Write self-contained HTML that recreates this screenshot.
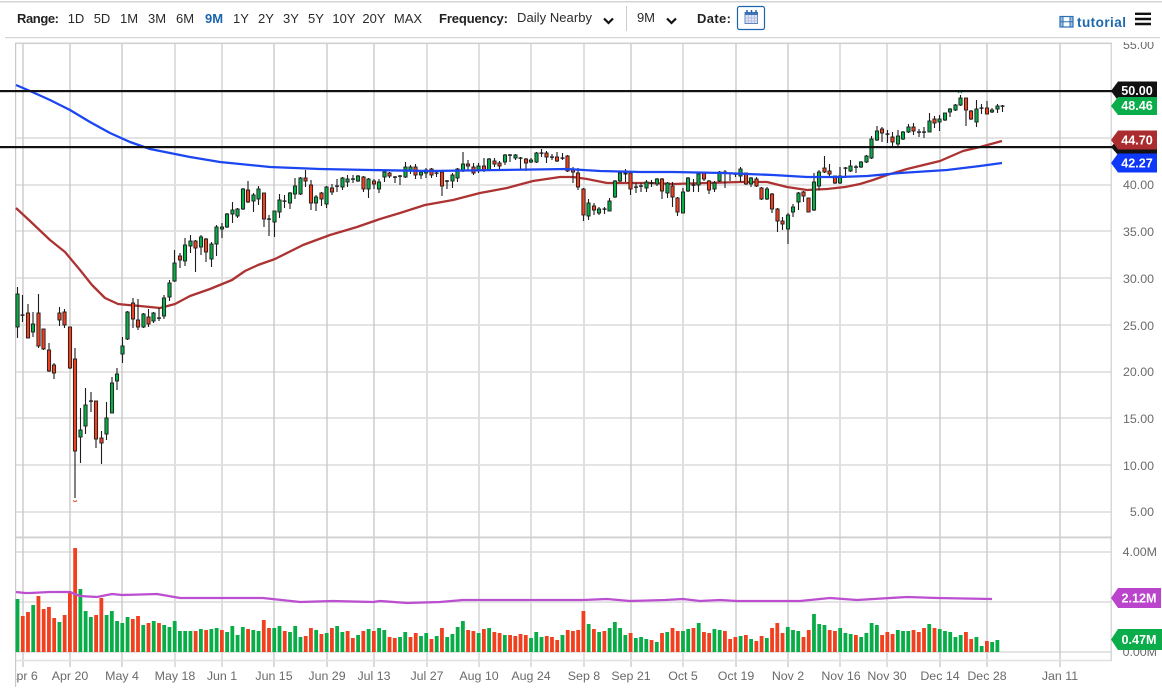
<!DOCTYPE html>
<html>
<head>
<meta charset="utf-8">
<title>Chart</title>
<style>
html,body{margin:0;padding:0;background:#fff;width:1162px;height:689px;overflow:hidden}
svg{display:block;font-family:"Liberation Sans",sans-serif}
.h{font-size:13px;fill:#2a2a2a}
.b{font-size:13px;font-weight:bold;fill:#222}
.a{font-size:12.4px;fill:#6a6a6a;text-anchor:end}
.x{font-size:12.4px;fill:#6a6a6a;text-anchor:middle}
.t{font-size:12.6px;font-weight:bold;fill:#fff;text-anchor:middle}
</style>
</head>
<body>
<svg id="s" xmlns="http://www.w3.org/2000/svg" width="1162" height="689" viewBox="0 0 1162 689">
<defs>
<clipPath id="top"><rect x="1112" y="42" width="50" height="20"/></clipPath>
<clipPath id="left"><rect x="16" y="665" width="40" height="24"/></clipPath>
</defs>
<rect x="0" y="1" width="1162" height="1.5" fill="#d4d4d4"/>
<rect x="5" y="37" width="1155" height="1.2" fill="#d4d4d4"/>

<text class="b" x="17" y="23" textLength="42">Range:</text>
<g class="h" text-anchor="middle">
<text x="76" y="23">1D</text><text x="102" y="23">5D</text><text x="129" y="23">1M</text><text x="157" y="23">3M</text><text x="185" y="23">6M</text>
<text x="214" y="23" font-weight="bold" style="fill:#1c64ad">9M</text>
<text x="241" y="23">1Y</text><text x="266" y="23">2Y</text><text x="291" y="23">3Y</text><text x="316" y="23">5Y</text><text x="344" y="23">10Y</text><text x="374" y="23">20Y</text><text x="408" y="23">MAX</text>
</g>
<text class="b" x="439" y="23" textLength="69">Frequency:</text>
<text class="h" x="517" y="22" textLength="75">Daily Nearby</text>
<path d="M604 18.500l4.500 4.500 4.500-4.500" fill="none" stroke="#111" stroke-width="2.2"/>
<rect x="626" y="6" width="1" height="25" fill="#ccc"/>
<text class="h" x="637" y="22" textLength="18">9M</text>
<path d="M667 18.500l4.500 4.500 4.500-4.500" fill="none" stroke="#111" stroke-width="2.2"/>
<text class="b" x="697" y="23" textLength="34">Date:</text>
<rect x="737.500" y="6.500" width="27" height="23" rx="2" fill="#fff" stroke="#1c64ad" stroke-width="1.2"/>
<rect x="745" y="12.500" width="12.500" height="11" fill="#e3e3f6" stroke="#5f86c2" stroke-width="1"/>
<rect x="745" y="12" width="13" height="3" fill="#3f74b8"/>
<path d="M747 10v3M751.500 10v3M756 10v3" stroke="#2d64ad" stroke-width="1.500"/>
<path d="M748.500 15v8M751.500 15v8M754.500 15v8M745 18h13M745 21h13" stroke="#a9b8dc" stroke-width=".7"/>

<rect x="1060" y="16.500" width="13" height="10.500" fill="none" stroke="#2a70b5" stroke-width="1.2"/>
<path d="M1063 16.500v10.500M1070 16.500v10.500M1060 21.700h13" stroke="#2a70b5" stroke-width="1"/>
<rect x="1060" y="16.500" width="3" height="10.500" fill="#2a70b5" opacity=".45"/>
<rect x="1070" y="16.500" width="3" height="10.500" fill="#2a70b5" opacity=".45"/>
<text x="1077" y="27" font-size="13.500" font-weight="bold" fill="#1c68ad" textLength="49">tutorial</text>
<path d="M1135 13.800h16M1135 19h16M1135 24h16" stroke="#111" stroke-width="2.400"/>

<g id="grid"></g>
<rect x="15" y="42.500" width="1097" height="1.600" fill="#d0d0d0"/>
<rect x="15" y="536.500" width="1097" height="1.800" fill="#cfcfcf"/>
<rect x="15" y="659.700" width="1097" height="1.600" fill="#e2e2e2"/>
<rect x="15" y="43" width="1.200" height="644" fill="#c8c8c8"/>
<rect x="1110.600" y="43" width="1.200" height="618" fill="#cfcfcf"/>

<g id="vol"></g>
<polyline fill="none" stroke="#bb4fd0" stroke-width="2.300" stroke-linejoin="round" points="16,592 25,593 30,593 50,592 70,592 80,596 97,597 112,594 122,595 157,594 180,598 207,598 263,598 300,602 333,601 373,602 380,601 407,603 440,602 463,600 533,600 583,600 607,599 630,601 665,600 683,599 700,601 720,600 737,601 783,601 800,601 830,598 857,600 907,597 937,598 992,599"/>
<polyline fill="none" stroke="#ad3232" stroke-width="2.300" stroke-linejoin="round" points="16,208 30,221 50,240 65,252 80,270 92,285 105,298 118,304 128,305 140,306 160,308 175,304 190,296 210,289 232,280 245,271 258,265 275,259 303,245 330,235 357,227 380,219 400,213 425,205 453,200 480,193 507,188 533,181 560,177 573,177 587,179 607,183 633,183 650,183 673,184 707,183 740,182 767,182 787,187 807,190 827,189 845,187 860,184 873,180 887,175 907,169 940,161 963,151 980,147 1002,141"/>
<g id="can"></g>
<polyline fill="none" stroke="#1b46f2" stroke-width="2.300" stroke-linejoin="round" points="16,85 30,91 50,100 70,110 90,122 110,133 130,142 150,149 170,153 190,157 220,162 270,167 320,169 370,170 430,171 500,170 567,169 600,171 640,172 673,172 723,173 773,175 807,177 840,177 867,176 900,173 947,170 980,166 1002,163"/>
<path d="M73 500.500q2 2 4 0" fill="none" stroke="#e8401f" stroke-width="1"/>
<path d="M958 93l2-2 2 2" fill="none" stroke="#0aad4a" stroke-width="1"/>
<rect x="0" y="90" width="1112" height="2.200" fill="#111"/>
<rect x="0" y="146" width="1112" height="2.200" fill="#111"/>

<g class="a">
<text x="1154" y="49" clip-path="url(#top)">55.00</text>
<text x="1154" y="189">40.00</text>
<text x="1154" y="236">35.00</text>
<text x="1154" y="283">30.00</text>
<text x="1154" y="330">25.00</text>
<text x="1154" y="376">20.00</text>
<text x="1154" y="423">15.00</text>
<text x="1154" y="470">10.00</text>
<text x="1154" y="516">5.00</text>
<text x="1157" y="556">4.00M</text>
<text x="1157" y="656">0.00M</text>
</g>

<g class="x">
<text x="23" y="680" clip-path="url(#left)">Apr 6</text>
<text x="70" y="680">Apr 20</text><text x="122" y="680">May 4</text><text x="175" y="680">May 18</text><text x="222" y="680">Jun 1</text><text x="274" y="680">Jun 15</text><text x="327" y="680">Jun 29</text><text x="374" y="680">Jul 13</text><text x="427" y="680">Jul 27</text><text x="479" y="680">Aug 10</text><text x="531" y="680">Aug 24</text><text x="584" y="680">Sep 8</text><text x="631" y="680">Sep 21</text><text x="683" y="680">Oct 5</text><text x="736" y="680">Oct 19</text><text x="788" y="680">Nov 2</text><text x="841" y="680">Nov 16</text><text x="887" y="680">Nov 30</text><text x="940" y="680">Dec 14</text><text x="987" y="680">Dec 28</text><text x="1060" y="680">Jan 11</text>
</g>

<path d="M1111 147l7-8h39v16h-39z" fill="#111"/>
<path d="M1111 91l7-9.500h39v19h-39z" fill="#111"/>
<text class="t" x="1137" y="95">50.00</text>
<path d="M1111 106l7-9h39v18h-39z" fill="#0aad4a"/>
<text class="t" x="1137" y="110">48.46</text>
<path d="M1111 140l7-9.500h39v19h-39z" fill="#ab2c2f"/>
<text class="t" x="1137" y="144.500">44.70</text>
<path d="M1111 163l7-9.500h39v19h-39z" fill="#0d38fa"/>
<text class="t" x="1137" y="167.500">42.27</text>
<path d="M1111 598l7-10h43v20h-43z" fill="#bb44cc"/>
<text class="t" x="1139" y="602.500">2.12M</text>
<path d="M1111 639.500l7-10.500h44v21h-44z" fill="#0aad4a"/>
<text class="t" x="1139" y="644">0.47M</text>
</svg>
<script>
var NS="http://www.w3.org/2000/svg";
function el(p,n,a){var e=document.createElementNS(NS,n);for(var k in a)e.setAttribute(k,a[k]);p.appendChild(e);return e}
var grid=document.getElementById("grid"),vol=document.getElementById("vol"),can=document.getElementById("can");
[91,138,185,231,278,325,372,418,465,512,552,602,652].forEach(function(y){el(grid,"rect",{x:15,y:y-1,width:1096,height:2,fill:"#e4e4e4"})});
[23,70,122,175,222,274,327,374,427,479,531,584,631,683,736,788,840,887,940,987,1060].forEach(function(x,i){
  var thin=[0,1,2,5,6,7,12,14,15,18,19,20].indexOf(i)>=0;
  el(grid,"rect",{x:x-(thin?.7:1),y:43,width:thin?1.4:2,height:624,fill:thin?"#cbcbcb":"#dfdfdf"});
});
var G="#08ad48",R="#f0401f",D="#1d1d1d";
var VS="g599 r616 r612 g605 r596 r609 r607 r618 g622 r615 r593 r548 g589 g611 g617 r615 r598 g615 g611 g621 g623 g617 r619 r616 g625 r623 g621 r623 g625 g627 g621 g631 g631 g631 r631 g629 r630 g629 g628 r630 g632 g626 g635 g627 r629 g630 g631 r620 r628 g628 g626 r631 g632 g626 g637 r636 r628 g630 r634 g633 r628 g626 g632 r631 r638 g635 r631 g629 r631 g628 g630 r637 r638 g637 g632 r637 r633 g636 g633 r639 g636 r628 g637 g634 g627 g621 r630 r631 g633 r629 g628 r632 r633 g635 r635 r636 r634 r635 g638 g632 g637 r636 r637 r640 g635 r630 r631 r630 r611 g624 r629 g632 r631 g628 g622 g628 g635 r633 g638 g637 g639 r640 g642 r633 g632 r628 r631 g631 g629 r628 g623 r632 r633 g629 g630 r631 r639 r637 g636 r635 g639 r641 r636 g638 r628 r623 r633 g627 g630 g631 r637 r630 g614 g624 g625 r630 r631 g628 g633 g634 r635 g637 g633 g623 g625 r635 r632 r634 g630 g631 g631 r630 r632 r628 g624 r628 g629 g631 g632 g637 g635 r632 r639 g637 g646 r641 g642 g640";
VS.split(" ").forEach(function(s,i){
  var y=+s.slice(1);
  el(vol,"rect",{x:(17.5+5.24*i-1.9).toFixed(2),y:y,width:3.8,height:652-y,fill:s[0]=="g"?G:R});
});
var CS="g294,327,287,338 d315,315,295,322 r313,338,304,338 g324,332,312,337 r313,346,294,348 r329,349,329,350 r350,371,343,372 r365,373,363,379 r313,320,307,326 r312,325,309,328 r327,368,327,369 r359,451,348,498 g430,437,408,463 g405,426,388,434 d401,402,392,412 r401,439,401,448 r438,443,431,464 g418,434,402,440 g383,413,377,413 g374,381,368,390 g346,354,337,363 g312,339,311,340 r303,319,298,328 r320,327,299,330 g314,327,313,328 r317,324,309,327 g313,321,312,323 d318,319,308,321 g298,316,295,319 g283,297,280,301 g263,281,250,282 r256,260,253,268 g245,261,238,266 g241,246,235,253 r241,248,240,272 g237,247,235,255 r239,252,238,262 g244,259,242,267 g227,244,225,256 g227,229,223,238 g214,227,213,228 g210,214,202,223 g209,216,208,218 g189,209,188,210 r190,202,181,203 g195,201,193,212 g189,199,186,205 r193,219,193,227 d219,220,215,236 g211,222,211,237 g200,212,194,218 d201,201,195,208 g193,203,192,209 g186,194,178,199 g178,194,177,195 r178,181,170,187 r185,203,180,210 g197,203,195,211 r193,199,192,206 g187,204,186,208 r188,192,184,195 d186,186,179,192 g178,187,177,190 g179,182,175,187 d179,179,175,183 g176,181,175,182 r177,189,176,192 g179,189,178,198 r181,184,179,189 g182,189,179,193 g172,177,171,182 r173,176,172,178 d177,177,176,183 d176,176,175,185 g167,177,162,178 g167,171,165,174 r167,175,164,179 g172,175,170,179 g170,173,168,178 r169,175,168,178 d173,173,171,177 r172,186,172,196 d181,181,180,189 g175,181,173,188 g169,178,168,182 g164,171,152,172 r164,166,160,170 r167,173,163,175 g166,171,163,173 r166,170,158,172 g159,170,158,171 r161,164,158,167 r163,166,161,171 g155,162,154,165 d155,155,154,162 g155,158,154,160 d158,158,157,169 r159,163,158,171 g160,162,158,163 g153,162,152,163 d153,153,149,157 r153,157,151,163 d157,157,154,160 r157,161,152,162 d158,158,153,160 r156,171,155,172 r169,172,167,183 r173,187,168,190 r189,215,188,221 g203,216,199,220 r206,210,203,215 g209,213,207,215 d209,209,207,214 g201,211,198,211 g181,197,180,198 g173,181,171,182 g173,174,169,182 r173,189,171,195 d187,187,183,193 d186,186,183,192 g182,188,180,192 d183,183,180,187 g179,184,178,186 r179,191,178,199 g183,193,182,198 r186,197,182,207 r198,212,197,216 g192,213,188,213 g178,191,177,192 d185,185,179,192 g174,185,173,192 r172,179,172,181 r181,190,180,194 g183,189,181,192 g172,181,171,182 r172,173,170,188 d173,173,173,181 d174,174,173,177 g169,176,167,182 r173,184,173,185 g178,184,177,187 r179,186,177,187 r188,199,187,200 g189,199,187,200 r194,209,193,213 r209,221,208,232 r221,224,217,230 g215,229,213,244 g207,212,204,217 g193,202,192,210 r192,196,191,202 r198,212,198,212 g182,210,173,211 g172,186,170,190 r168,172,156,173 r171,174,164,178 r176,183,176,184 g176,183,167,184 d168,168,167,177 g166,171,160,172 d167,167,165,173 g162,167,161,168 g156,162,155,163 g139,158,136,159 g131,140,126,141 r129,133,127,142 d134,134,130,143 r137,142,132,147 g136,144,130,147 g132,139,131,140 g127,132,124,133 r127,131,123,135 d132,132,129,137 d132,132,127,138 g121,132,113,132 r119,123,116,128 g119,122,115,131 g113,120,113,121 g109,112,108,117 g105,110,104,111 g98,105,95,106 r98,110,98,126 r111,119,110,120 g109,122,100,127 d108,108,104,114 r108,114,101,114 g110,112,108,113 g106,109,104,113 d106,106,105,112";
CS.split(" ").forEach(function(s,i){
  var p=s.slice(1).split(",").map(Number),x=17.5+5.24*i,c=s[0];
  var xx=Math.round(x*2)/2;
  el(can,"line",{x1:xx,x2:xx,y1:p[2],y2:p[3],stroke:D,"stroke-width":1.1});
  if(c=="d"){el(can,"rect",{x:xx-2,y:p[0]-.6,width:4,height:Math.max(1.4,p[1]-p[0]),fill:D})}
  else{el(can,"rect",{x:xx-1.6,y:p[0],width:3.2,height:p[1]-p[0],fill:c=="g"?G:R,stroke:D,"stroke-width":.9})}
});
</script>
</body>
</html>
